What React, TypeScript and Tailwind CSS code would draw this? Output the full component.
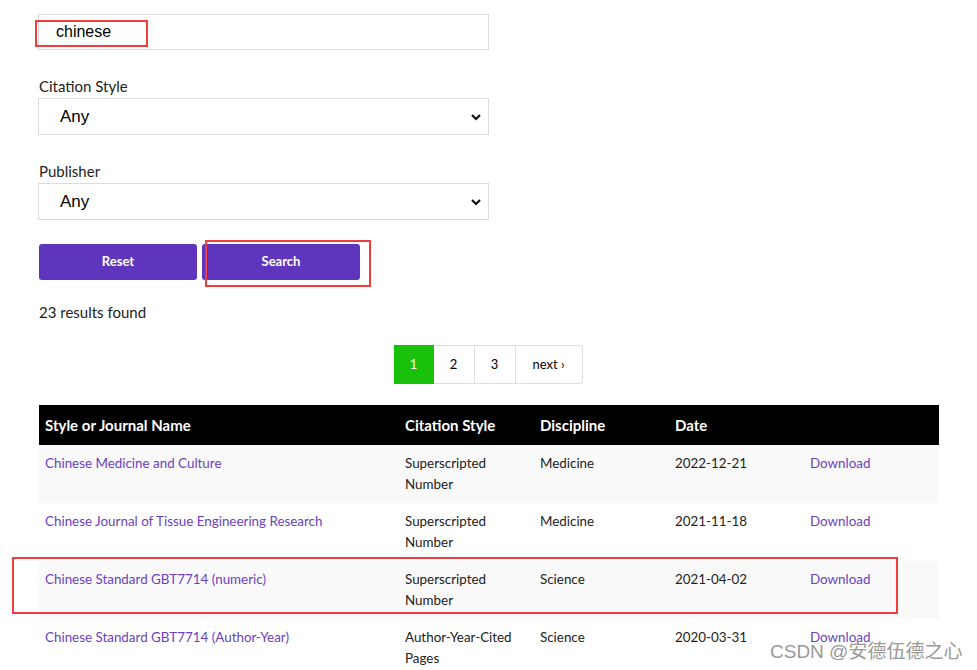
const rows = [
  { name: "Chinese Medicine and Culture", style: ["Superscripted", "Number"], discipline: "Medicine", date: "2022-12-21" },
  { name: "Chinese Journal of Tissue Engineering Research", style: ["Superscripted", "Number"], discipline: "Medicine", date: "2021-11-18" },
  { name: "Chinese Standard GBT7714 (numeric)", style: ["Superscripted", "Number"], discipline: "Science", date: "2021-04-02", marked: true },
  { name: "Chinese Standard GBT7714 (Author-Year)", style: ["Author-Year-Cited", "Pages"], discipline: "Science", date: "2020-03-31" },
];

function FakeSelect({ label }: { label: string }) {
  return (
    <div>
      <div className="pl-px text-[15px] leading-[19px] text-[#222]">{label}</div>
      <div className="mt-[2px] h-[37px] border border-[#dcdcdc] flex items-center justify-between pl-[21px] pr-[4px] bg-white">
        <span className="text-[17px] text-black font-['Liberation_Sans',sans-serif]">Any</span>
        <svg width="12" height="8" viewBox="0 0 12 8" className="mr-[2px]">
          <path d="M2 2l4 4 4-4" stroke="#111" strokeWidth="2.2" fill="none" />
        </svg>
      </div>
    </div>
  );
}

export default function App() {
  return (
    <div className="relative w-[977px] h-[670px] overflow-hidden bg-white font-['Lato',sans-serif] text-[#222]">
      <div className="pl-[38px] pr-[38px] pt-[14px]">
        <div className="w-[451px]">
          <div className="relative h-[36px] border border-[#dcdcdc] flex items-center pl-[17px]">
            <span className="text-[16px] text-black font-['Liberation_Sans',sans-serif]">chinese</span>
            <div className="absolute left-[-4px] top-[5px] w-[113px] h-[27px] border-2 border-[#f03c3c]" />
          </div>

          <div className="mt-[27px]">
            <FakeSelect label="Citation Style" />
          </div>
          <div className="mt-[27px]">
            <FakeSelect label="Publisher" />
          </div>

          <div className="mt-[24px] flex gap-[5px] pl-px">
            <button className="w-[158px] h-[36px] rounded-[3px] bg-[#6035be] text-white text-[13px] font-bold">Reset</button>
            <div className="relative">
              <button className="w-[158px] h-[36px] rounded-[3px] bg-[#6035be] text-white text-[13px] font-bold">Search</button>
              <div className="absolute left-[3px] top-[-4px] w-[166px] h-[47px] border-2 border-[#f03c3c]" />
            </div>
          </div>

          <div className="mt-[22px] pl-px text-[15px] leading-[20px]">23 results found</div>
        </div>

        <div className="mt-[23px] flex justify-center pr-[1px]">
          <div className="flex h-[39px] text-[13px]">
            <div className="w-[40px] flex items-center justify-center bg-[#19c10b] text-white">1</div>
            <div className="w-[41px] flex items-center justify-center border border-l-0 border-[#dedede] text-black">2</div>
            <div className="w-[41px] flex items-center justify-center border border-l-0 border-[#dedede] text-black">3</div>
            <div className="w-[67px] flex items-center justify-center border border-l-0 border-[#dedede] rounded-r-[4px] text-black">next ›</div>
          </div>
        </div>

        <table className="mt-[21px] ml-px w-[900px] border-collapse table-fixed text-[13.4px]">
          <colgroup>
            <col className="w-[360px]" />
            <col className="w-[135px]" />
            <col className="w-[135px]" />
            <col className="w-[135px]" />
            <col className="w-[135px]" />
          </colgroup>
          <thead>
            <tr className="bg-black text-white text-[15px] font-bold h-[40px]">
              <th className="text-left pl-[6px]">Style or Journal Name</th>
              <th className="text-left pl-[6px]">Citation Style</th>
              <th className="text-left pl-[6px]">Discipline</th>
              <th className="text-left pl-[6px]">Date</th>
              <th />
            </tr>
          </thead>
          <tbody>
            {rows.map((r, i) => (
              <tr key={i} className={`h-[58px] align-top leading-[21px] ${i % 2 === 0 ? "bg-[#f9f9f9]" : "bg-white"}`}>
                <td className="relative pl-[6px] pt-[8px] text-[#6b3fc2]">
                  {r.name}
                  {r.marked && (
                    <div className="absolute left-[-27px] top-[-4px] w-[886px] h-[57px] border-2 border-[#f03c3c] pointer-events-none" />
                  )}
                </td>
                <td className="pl-[6px] pt-[8px]">
                  {r.style[0]}
                  <br />
                  {r.style[1]}
                </td>
                <td className="pl-[6px] pt-[8px]">{r.discipline}</td>
                <td className="pl-[6px] pt-[8px]">{r.date}</td>
                <td className="pl-[6px] pt-[8px] text-[#6b3fc2]">Download</td>
              </tr>
            ))}
          </tbody>
        </table>
      </div>

      <div className="absolute left-[770px] top-[638px] text-[19px] text-[#999] font-['Liberation_Sans','Noto_Sans_CJK_SC',sans-serif] whitespace-nowrap">
        CSDN @安德伍德之心
      </div>
    </div>
  );
}
